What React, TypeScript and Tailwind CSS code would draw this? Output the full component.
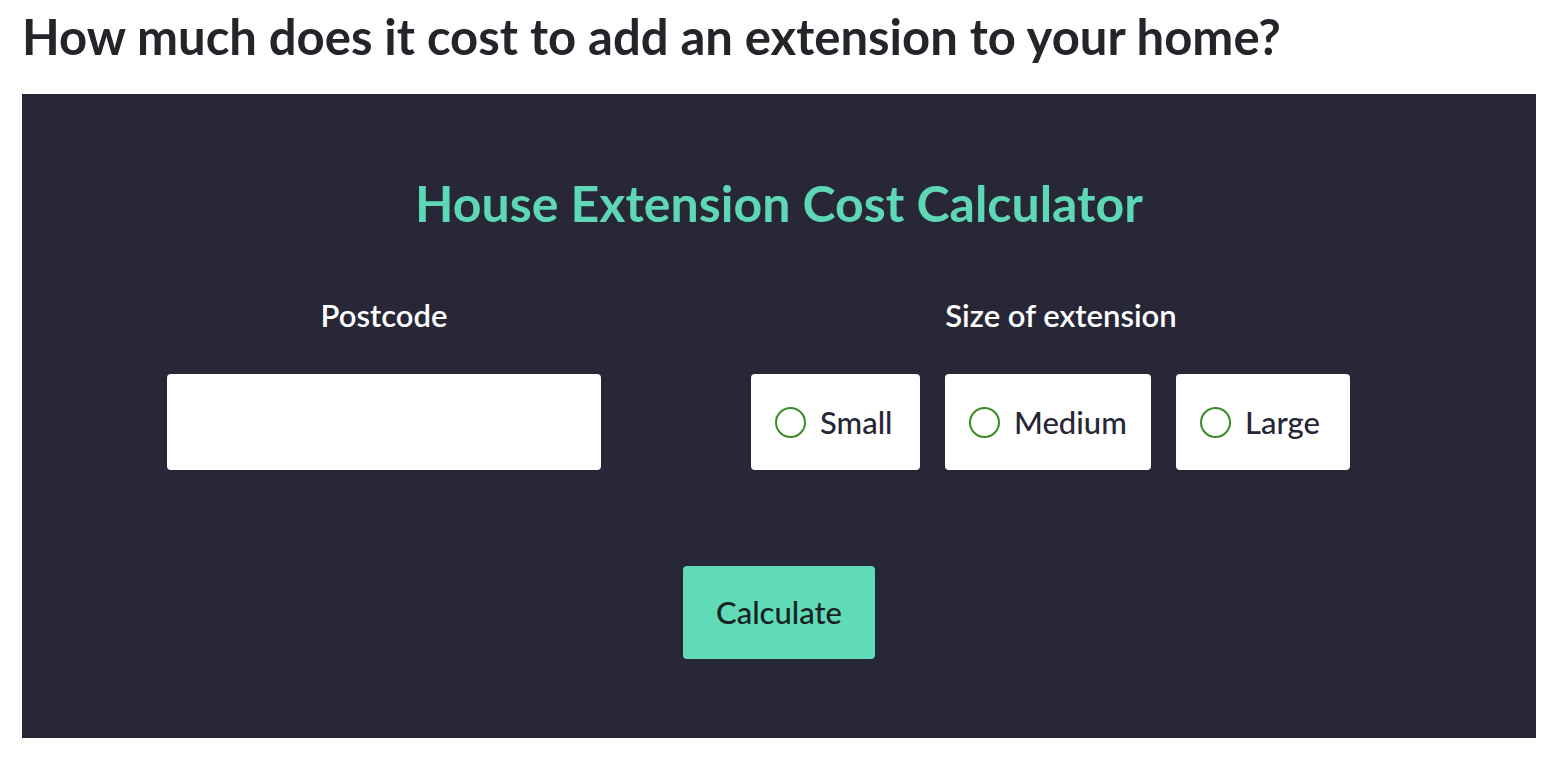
import { useState } from 'react';

const sizes = [
	{ id: 'small', label: 'Small', width: 'w-[169px]' },
	{ id: 'medium', label: 'Medium', width: 'w-[206px]' },
	{ id: 'large', label: 'Large', width: 'w-[174px]' },
];

export default function App() {
	const [postcode, setPostcode] = useState('');
	const [size, setSize] = useState<string | null>(null);

	return (
		<div className="min-h-screen bg-white pl-[22px] pr-[20px] font-['Lato',sans-serif]">
			<h1 className="pt-[12px] text-[49px] font-bold leading-none text-[#23252a]">
				How much does it cost to add an extension to your home?
			</h1>

			<section className="mt-[33px] flex h-[644px] flex-col items-center bg-[#282738] pt-[84px]">
				<h2 className="text-[50px] font-bold leading-none text-[#5dd7b5]">
					House Extension Cost Calculator
				</h2>

				<div className="mt-[72px] flex w-full pl-[145px]">
					<div className="flex w-[434px] flex-col items-center">
						<label
							htmlFor="postcode"
							className="text-[31px] font-semibold leading-none text-white"
						>
							Postcode
						</label>
						<input
							id="postcode"
							type="text"
							value={postcode}
							onChange={(e) => setPostcode(e.target.value)}
							className="mt-[43px] h-[96px] w-[434px] rounded-[4px] bg-white px-4 text-[28px] text-[#272636] outline-none"
						/>
					</div>

					<div className="ml-[150px] flex w-[620px] flex-col items-center">
						<span className="text-[31px] font-semibold leading-none text-white">
							Size of extension
						</span>
						<div className="mt-[43px] flex w-full gap-[25px]">
							{sizes.map((s) => (
								<button
									key={s.id}
									type="button"
									onClick={() => setSize(s.id)}
									className={`flex h-[96px] ${s.width} items-center gap-[14px] rounded-[4px] bg-white pl-[24px]`}
								>
									<span className="flex h-[31px] w-[31px] items-center justify-center rounded-full border-2 border-[#3b8a25]">
										{size === s.id && (
											<span className="h-[15px] w-[15px] rounded-full bg-[#3b8a25]" />
										)}
									</span>
									<span className="text-[31px] font-medium leading-none text-[#272636]">
										{s.label}
									</span>
								</button>
							))}
						</div>
					</div>
				</div>

				<button
					type="button"
					className="mt-[96px] h-[93px] w-[192px] rounded-[4px] bg-[#5fdbb8] text-[31px] font-medium text-[#15231f]"
				>
					Calculate
				</button>
			</section>
		</div>
	);
}
